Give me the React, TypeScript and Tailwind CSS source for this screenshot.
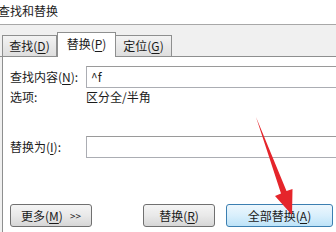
import React from "react";

const U = ({ children }: { children: React.ReactNode }) => (
  <span className="underline underline-offset-[2px]">{children}</span>
);

const tabOff =
  "h-[21px] flex items-center justify-center border border-[#8e8f8f] border-b-0 bg-gradient-to-b from-[#f3f3f3] to-[#dedede] text-[12px]";

const btn =
  "h-[23px] flex items-center justify-center rounded-[3px] border text-[12px]";

export default function App() {
  return (
    <div
      className="w-[336px] h-[232px] overflow-hidden bg-white text-[#1b1b1b] flex flex-col relative"
      style={{ fontFamily: '"Noto Sans CJK SC", "Liberation Sans", sans-serif' }}
    >
      {/* title */}
      <div className="h-[24px] flex items-center ml-[-2px] text-[12px] leading-none pb-[2px]">
        查找和替换
      </div>
      <div className="border-t border-[#a8a8a8]" />

      <div className="flex-1 flex flex-col bg-[#f0f0f0]">
        {/* tab strip */}
        <div className="h-[32px] flex items-end pl-[2px] border-b border-[#8e8f8f]">
          <div className={tabOff + " w-[55px]"}>
            查找(<U>D</U>)
          </div>
          <div className="w-[59px] h-[25px] -mb-px flex items-center justify-center bg-white border border-[#8e8f8f] border-b-0 text-[12px] pb-[2px]">
            替换(<U>P</U>)
          </div>
          <div className={tabOff + " w-[56px] border-l-0"}>
            定位(<U>G</U>)
          </div>
        </div>

        {/* panel */}
        <div className="flex-1 ml-[2px] bg-white border-l border-[#8e8f8f] pl-[7px] flex flex-col text-[12px]">
          <div className="mt-[9px] flex items-center">
            <div className="w-[76px] shrink-0">
              查找内容(<U>N</U>):
            </div>
            <div className="w-[280px] shrink-0 h-[22px] border border-[#abadb3] border-t-[#9a9a9a] flex items-center pl-[4px]">
              ^f
            </div>
          </div>
          <div className="mt-[1px] flex items-center h-[16px]">
            <div className="w-[76px]">选项:</div>
            <div>区分全/半角</div>
          </div>

          <div className="mt-[31px] flex items-center">
            <div className="w-[76px] shrink-0">
              替换为(<U>I</U>):
            </div>
            <div className="w-[280px] shrink-0 h-[22px] border border-[#abadb3] border-t-[#9a9a9a]" />
          </div>

          <div className="mt-[46px] flex items-center">
            <div
              className={
                btn +
                " w-[82px] border-[#707070] bg-gradient-to-b from-[#f4f4f4] via-[#e9e9e9] to-[#d6d6d6]"
              }
            >
              更多(<U>M</U>)<span className="ml-[7px] text-[10px]">&gt;&gt;</span>
            </div>
            <div
              className={
                btn +
                " ml-[51px] w-[72px] border-[#707070] bg-gradient-to-b from-[#f4f4f4] via-[#e9e9e9] to-[#d6d6d6]"
              }
            >
              替换(<U>R</U>)
            </div>
            <div
              className={
                btn +
                " ml-[11px] w-[107px] border-[#3c7fb1] bg-gradient-to-b from-[#edf7fd] via-[#d9effc] to-[#bde3f8]"
              }
            >
              全部替换(<U>A</U>)
            </div>
          </div>
        </div>
      </div>

      {/* red arrow annotation */}
      <svg
        className="absolute left-0 top-0 pointer-events-none"
        width="336"
        height="232"
        viewBox="0 0 336 232"
      >
        <polygon
          points="256,117 286.5,191 292.5,189 292,215 275,196 281,193.5"
          fill="#e5252b"
        />
      </svg>
    </div>
  );
}
